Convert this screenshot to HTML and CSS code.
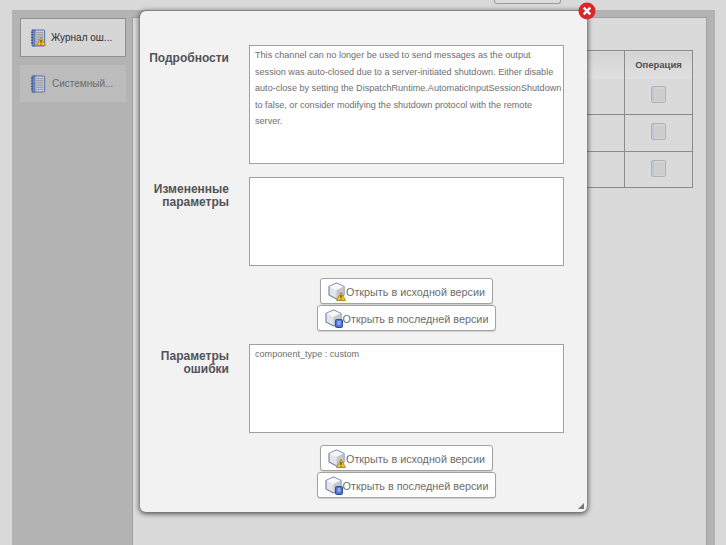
FILE: index.html
```html
<!DOCTYPE html>
<html lang="ru">
<head>
<meta charset="utf-8">
<title>Журнал ошибок</title>
<link rel="stylesheet" href="styles.css">
</head>
<body>
<svg class="defs" width="0" height="0" aria-hidden="true">
  <defs>
    <symbol id="book" viewBox="0 0 18 20">
      <rect x="2.5" y="1" width="14" height="18" rx="1" fill="#c9ccd1" stroke="#4a63a8"/>
      <rect x="2.5" y="1" width="3" height="18" fill="#7f95cc" stroke="#4a63a8"/>
      <path d="M7 4h8M7 6h8M7 8h8M7 10h8M7 12h8M7 14h8M7 16h8" stroke="#90959b" stroke-width="1"/>
      <path d="M1 3.5h3M1 6.5h3M1 9.5h3M1 12.5h3M1 15.5h3" stroke="#3c4f8a" stroke-width="1"/>
    </symbol>
    <symbol id="warn" viewBox="0 0 10 9">
      <path d="M5 .5 9.6 8.5H.4Z" fill="#f2c230" stroke="#a57a10" stroke-width=".8"/>
      <path d="M5 3v3M5 6.9v.8" stroke="#3a2c05" stroke-width="1"/>
    </symbol>
    <symbol id="cube" viewBox="0 0 18 18">
      <path d="M9 1 16.5 4.5V13L9 17 1.5 13V4.5Z" fill="#e3e5e8" stroke="#7488b8" stroke-width="1.2" stroke-linejoin="round"/>
      <path d="M2 4.5 9 8 16 4.5 9 1.6Z" fill="#f7f8f9"/>
      <path d="M9 8 16 4.8V12.7L9 16.4Z" fill="#c4c7cc"/>
    </symbol>
    <symbol id="page" viewBox="0 0 8 9">
      <rect x=".5" y=".5" width="7" height="8" rx="1" fill="#4d74d0" stroke="#2f4f9e"/>
      <path d="M2.5 3h3M2.5 5h3" stroke="#dfe8ff"/>
    </symbol>
    <symbol id="cube-warn" viewBox="0 0 18 19">
      <use href="#cube" x="-0.5" y="0" width="18" height="18"/>
      <use href="#warn" x="8" y="10" width="10" height="9"/>
    </symbol>
    <symbol id="cube-new" viewBox="0 0 18 19">
      <use href="#cube" x="-0.5" y="0" width="18" height="18"/>
      <use href="#page" x="10" y="10" width="8" height="9"/>
    </symbol>
    <symbol id="opicon" viewBox="0 0 15 17">
      <rect x=".5" y=".5" width="14" height="16" rx="1.5" fill="#d4d4d6" stroke="#adb1c0"/>
      <rect x="1" y="1" width="2.5" height="15" fill="#c3c6d0"/>
      <path d="M4.5 4h9M4.5 6h9M4.5 8h9M4.5 10h9M4.5 12h9M4.5 14h9" stroke="#c6c6c6"/>
    </symbol>
  </defs>
</svg>

<div class="topbar"><div class="top-button"></div></div>

<div class="shell">
  <aside class="sidebar">
    <div class="tab tab-active">
      <span class="tab-icon">
        <svg class="book-svg"><use href="#book"/></svg>
        <svg class="book-warn"><use href="#warn"/></svg>
      </span>
      <span>Журнал ош...</span>
    </div>
    <div class="tab tab-idle">
      <span class="tab-icon"><svg class="book-svg"><use href="#book"/></svg></span>
      <span>Системный...</span>
    </div>
  </aside>
  <main class="panel">
    <table class="grid">
      <tr class="grid-head"><th class="col-main"></th><th class="col-op">Операция</th></tr>
      <tr class="row-1"><td></td><td class="op-cell"><svg class="op-icon"><use href="#opicon"/></svg></td></tr>
      <tr class="row-2"><td></td><td class="op-cell"><svg class="op-icon"><use href="#opicon"/></svg></td></tr>
      <tr class="row-3"><td></td><td class="op-cell"><svg class="op-icon"><use href="#opicon"/></svg></td></tr>
    </table>
  </main>
</div>

<section class="modal">
  <button class="close" aria-label="Закрыть">
    <svg viewBox="0 0 18 18" width="18" height="18"><circle cx="9" cy="9" r="8.5" fill="#d9262c"/><path d="M5.7 5.7 12.3 12.3M12.3 5.7 5.7 12.3" stroke="#fff" stroke-width="2.4"/></svg>
  </button>

  <div class="field field-details">
    <div class="label">Подробности</div>
    <div class="box box-tall">This channel can no longer be used to send messages as the output<br>session was auto-closed due to a server-initiated shutdown. Either disable<br>auto-close by setting the DispatchRuntime.AutomaticInputSessionShutdown<br>to false, or consider modifying the shutdown protocol with the remote<br>server.</div>
  </div>

  <div class="field field-changed">
    <div class="label">Измененные параметры</div>
    <div class="box box-mid"></div>
  </div>

  <div class="actions">
    <button class="btn"><svg class="btn-icon"><use href="#cube-warn"/></svg><span class="btn-text">Открыть в исходной версии</span></button>
    <button class="btn"><svg class="btn-icon"><use href="#cube-new"/></svg><span class="btn-text">Открыть в последней версии</span></button>
  </div>

  <div class="field field-error">
    <div class="label">Параметры ошибки</div>
    <div class="box box-mid box-error">component_type : custom</div>
  </div>

  <div class="actions">
    <button class="btn"><svg class="btn-icon"><use href="#cube-warn"/></svg><span class="btn-text">Открыть в исходной версии</span></button>
    <button class="btn"><svg class="btn-icon"><use href="#cube-new"/></svg><span class="btn-text">Открыть в последней версии</span></button>
  </div>

  <svg class="grip" viewBox="0 0 8 8" width="8" height="8"><path d="M7 1V7H1Z" fill="#777"/></svg>
</section>
</body>
</html>
```

FILE: styles.css
```css
* { box-sizing: border-box; }
html, body { height: 100%; }
body {
  margin: 0;
  height: 545px;
  overflow: hidden;
  background: #d9d9d9;
  font-family: "Liberation Sans", Arial, sans-serif;
  display: flex;
  flex-direction: column;
  position: relative;
}
.defs { position: absolute; }

.topbar { height: 10px; flex: none; position: relative; padding-left: 494px; }
.top-button {
  width: 67px;
  height: 4px;
  background: #dcdcdc;
  border: 1px solid #9b9b9b;
  border-top: 0;
  border-radius: 0 0 3px 3px;
}

.shell {
  flex: 1;
  min-height: 0;
  margin: 0 11px 0 12px;
  background: #b3b3b3;
  display: flex;
}
.sidebar {
  width: 120px;
  flex: none;
  padding: 8px 0 0 8px;
  display: flex;
  flex-direction: column;
  gap: 8px;
}
.tab {
  width: 106px;
  display: flex;
  align-items: center;
  font-size: 10px;
  padding-left: 9px;
  gap: 5px;
}
.tab-active {
  height: 39px;
  background: #d6d6d6;
  border: 1px solid #8f8f8f;
  color: #2e2e2e;
}
.tab-idle {
  height: 37px;
  background: #bcbcbc;
  color: #6a6a6a;
  padding-left: 10px;
  gap: 6px;
}
.tab-icon { position: relative; width: 16px; height: 18px; flex: none; display: block; }
.book-svg { width: 16px; height: 18px; display: block; }
.book-warn { position: absolute; left: 6px; top: 8px; width: 10px; height: 9px; }

.panel {
  flex: 1;
  margin: 7px 8px 0 0;
  background: #dadada;
  border: 1px solid #a0a0a0;
  border-bottom: 0;
  padding: 32px 13px 0 0;
  display: flex;
  justify-content: flex-end;
  align-items: flex-start;
}
.grid {
  width: 520px;
  height: 138px;
  border-collapse: collapse;
  font-size: 9.5px;
  table-layout: fixed;
}
.grid th, .grid td { border: 1px solid #8b8b8b; padding: 0; }
.grid-head th {
  height: 28px;
  background: linear-gradient(#d4d4d4, #e0e0e0);
  border-bottom: 0;
  color: #505050;
  font-weight: bold;
}
.col-op { width: 68px; }
.grid .row-1 td { height: 36px; border-top: 0; }
.row-2 td { height: 37px; }
.row-3 td { height: 36px; }
.grid .op-cell { text-align: center; padding-bottom: 3px; }
.op-icon { width: 15px; height: 17px; display: block; margin: 0 auto; }

.modal {
  position: absolute;
  left: 140px;
  top: 11px;
  width: 447px;
  height: 501px;
  background: #f2f2f2;
  border-radius: 6px;
  box-shadow: 0 1px 5px 1px rgba(40, 40, 40, .75);
  padding: 34px 23px 0 0;
}
.close {
  position: absolute;
  right: -9px;
  top: -9px;
  width: 18px;
  height: 18px;
  border: 0;
  padding: 0;
  background: none;
}
.close svg { display: block; }
.grip { position: absolute; right: 2px; bottom: 2px; }

.field {
  display: grid;
  grid-template-columns: 89px 315px;
  column-gap: 20px;
}
.label {
  font-size: 12px;
  font-weight: bold;
  color: #525257;
  text-align: right;
  line-height: 13px;
  padding-top: 6px;
}
.box {
  background: #fff;
  border: 1px solid #a0a0a0;
  font-size: 9.1px;
  color: #6e6e6e;
  line-height: 16.5px;
  padding: 1px 0 0 5px;
  white-space: nowrap;
}
.box-tall { height: 119px; }
.box-mid { height: 89px; }
.field-details .label { padding-top: 7px; }
.field-changed { margin-top: 13px; }
.field-changed .label { padding-top: 6px; }
.field-error .label { padding-top: 6px; }

.actions {
  display: flex;
  flex-direction: column;
  align-items: center;
  margin: 12px 0 13px 109px;
  width: 315px;
}
.btn {
  height: 26px;
  display: flex;
  align-items: center;
  background: #fff;
  border: 1px solid #a3a3a3;
  border-radius: 3px;
  box-shadow: 0 1px 1px rgba(0,0,0,.15);
  font: 10.8px "Liberation Sans", Arial, sans-serif;
  color: #6c6c6c;
  padding: 0 7px;
}
.btn + .btn { margin-top: 1px; }
.btn-text { padding-top: 2px; }
.btn-icon { width: 18px; height: 19px; flex: none; }
```
